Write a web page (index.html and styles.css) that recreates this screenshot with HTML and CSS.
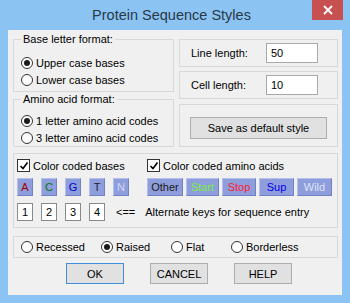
FILE: index.html
```html
<!DOCTYPE html>
<html lang="en">
  <head>
    <meta charset="UTF-8">
    <title>Protein Sequence Styles</title>
    <link rel="stylesheet" href="styles.css">
  </head>
  <body>
    <div class="window">
      <div class="titlebar">
        <span></span>
        <span class="title">Protein Sequence Styles</span>
        <span class="close">
          <svg width="10" height="10" viewBox="0 0 10 10"><path d="M1 1L9 9M9 1L1 9" stroke="#fff" stroke-width="1.8"/></svg>
        </span>
      </div>

      <div class="client">
        <div class="top">
          <div class="left">
            <fieldset class="group first">
              <legend>Base letter format:</legend>
              <div class="opt"><span class="radio on"></span>Upper case bases</div>
              <div class="opt"><span class="radio"></span>Lower case bases</div>
            </fieldset>
            <fieldset class="group second">
              <legend>Amino acid format:</legend>
              <div class="opt"><span class="radio on"></span>1 letter amino acid codes</div>
              <div class="opt"><span class="radio"></span>3 letter amino acid codes</div>
            </fieldset>
          </div>

          <div class="right">
            <div class="box field">
              <span class="lbl">Line length:</span>
              <span class="input">50</span>
            </div>
            <div class="box field">
              <span class="lbl">Cell length:</span>
              <span class="input">10</span>
            </div>
            <div class="box save-box">
              <button class="btn save">Save as default style</button>
            </div>
          </div>
        </div>

        <div class="box colors">
          <div class="chk-row"><span class="check"><svg width="10" height="10" viewBox="0 0 10 10"><path d="M1.5 5L4 7.5L8.5 1.5" fill="none" stroke="#000" stroke-width="1.6"/></svg></span>Color coded bases</div>
          <div class="chk-row"><span class="check"><svg width="10" height="10" viewBox="0 0 10 10"><path d="M1.5 5L4 7.5L8.5 1.5" fill="none" stroke="#000" stroke-width="1.6"/></svg></span>Color coded amino acids</div>

          <div class="bases">
            <span class="cb a">A</span>
            <span class="cb c">C</span>
            <span class="cb g">G</span>
            <span class="cb t">T</span>
            <span class="cb n">N</span>
          </div>
          <div class="aminos">
            <span class="cb other">Other</span>
            <span class="cb start">Start</span>
            <span class="cb stop">Stop</span>
            <span class="cb sup">Sup</span>
            <span class="cb wild">Wild</span>
          </div>

          <div class="keys">
            <span class="key">1</span>
            <span class="key">2</span>
            <span class="key">3</span>
            <span class="key">4</span>
            <span class="arrow">&lt;==</span>
            <span>Alternate keys for sequence entry</span>
          </div>
        </div>

        <div class="box styles">
          <div class="opt w80"><span class="radio"></span>Recessed</div>
          <div class="opt w70"><span class="radio on"></span>Raised</div>
          <div class="opt w60"><span class="radio"></span>Flat</div>
          <div class="opt"><span class="radio"></span>Borderless</div>
        </div>

        <div class="actions">
          <button class="btn ok">OK</button>
          <button class="btn">CANCEL</button>
          <button class="btn">HELP</button>
        </div>
      </div>
    </div>
  </body>
</html>
```

FILE: styles.css
```css
body {
  margin: 0;
  width: 350px;
  height: 303px;
  background: #8bc4f3;
  font-family: "Liberation Sans", Arial, sans-serif;
  font-size: 11px;
  color: #000;
  overflow: hidden;
}

.window {
  width: 350px;
  height: 303px;
}

.titlebar {
  height: 30px;
  display: grid;
  grid-template-columns: 1fr auto 1fr;
  padding-right: 7px;
}

.title {
  font-size: 14.5px;
  color: #2a3848;
  line-height: 30px;
}

.close {
  justify-self: end;
  width: 31px;
  height: 20px;
  background: #c75050;
  display: flex;
  align-items: center;
  justify-content: center;
}

.client {
  margin: 0 8px;
  height: 265px;
  background: #f0f0f0;
  padding: 3px 4px 0 5px;
  box-sizing: border-box;
}

.top {
  display: grid;
  grid-template-columns: 161px 159px;
  gap: 5px;
}

.group {
  margin: 0;
  border: 1px solid #d8d8d8;
  padding: 0 0 0 7px;
}

.group legend {
  padding: 0 2px;
  line-height: 13px;
}

.first {
  padding-top: 8px;
  padding-bottom: 3px;
}

.second {
  margin-top: 1px;
  padding-top: 6px;
}

.opt {
  display: flex;
  align-items: center;
  height: 17px;
  white-space: nowrap;
}

.radio {
  width: 10px;
  height: 10px;
  border: 1px solid #333;
  border-radius: 50%;
  background: #fff;
  margin-right: 3px;
  display: flex;
  align-items: center;
  justify-content: center;
}

.radio.on::after {
  content: "";
  width: 6px;
  height: 6px;
  border-radius: 50%;
  background: #1a1a1a;
}

.right {
  margin-top: 6px;
  display: flex;
  flex-direction: column;
}

.box {
  border: 1px solid #d8d8d8;
  box-sizing: border-box;
}

.field {
  height: 28px;
  display: flex;
  align-items: center;
  padding-left: 11px;
  margin-bottom: 4px;
}

.lbl {
  width: 75px;
}

.input {
  width: 52px;
  height: 20px;
  box-sizing: border-box;
  border: 1px solid #a8a8a8;
  background: #fff;
  padding: 3px 0 0 4px;
}

.save-box {
  margin-top: 1px;
  height: 43px;
  display: flex;
  justify-content: center;
  padding-top: 12px;
}

.btn {
  font-family: "Liberation Sans", Arial, sans-serif;
  font-size: 11px;
  color: #000;
  background: #e1e1e1;
  border: 1px solid #adadad;
  height: 22px;
  padding: 0;
}

.save {
  width: 137px;
}

.colors {
  margin-top: 6px;
  height: 75px;
  padding: 5px 0 0 3px;
  display: grid;
  grid-template-columns: 130px auto;
  grid-template-rows: 13px 18px 18px;
  row-gap: 6px;
}

.chk-row {
  display: flex;
  align-items: center;
  white-space: nowrap;
}

.check {
  width: 11px;
  height: 11px;
  border: 1px solid #333;
  background: #fff;
  margin-right: 3px;
  display: flex;
  align-items: center;
  justify-content: center;
}

.bases {
  display: flex;
  gap: 8px;
}

.aminos {
  display: flex;
  gap: 3px;
}

.cb {
  height: 18px;
  width: 16px;
  box-sizing: border-box;
  background: #8e9ddc;
  border: 1px solid;
  border-color: #b4bfeb #7081c4 #7081c4 #b4bfeb;
  display: flex;
  align-items: center;
  justify-content: center;
}

.a { color: #a00000; }
.c { color: #007a00; }
.g { color: #0000c8; }
.t { color: #1d1d3a; }
.n { color: #d0d8f4; }

.other { width: 36px; color: #1a1a1a; }
.start { width: 33px; color: #7cf040; }
.stop { width: 34px; color: #ff2030; }
.sup { width: 35px; color: #0000f0; }
.wild { width: 35px; color: #dde3f8; }

.keys {
  grid-column: 1 / 3;
  display: flex;
  align-items: center;
  gap: 8px;
  margin-top: 2px;
}

.key {
  width: 16px;
  height: 18px;
  box-sizing: border-box;
  border: 1px solid #8a8a8a;
  background: #fff;
  display: flex;
  align-items: center;
  justify-content: center;
}

.arrow {
  margin: 0 2px 0 3px;
}

.styles {
  margin-top: 8px;
  height: 22px;
  display: flex;
  align-items: center;
  padding-left: 7px;
}

.w80 { width: 80px; }
.w70 { width: 70px; }
.w60 { width: 60px; }

.actions {
  display: flex;
  gap: 26px;
  padding-left: 53px;
  margin-top: 5px;
}

.actions .btn {
  width: 58px;
  height: 21px;
}

.ok {
  border-color: #3c8fd8;
}
```
